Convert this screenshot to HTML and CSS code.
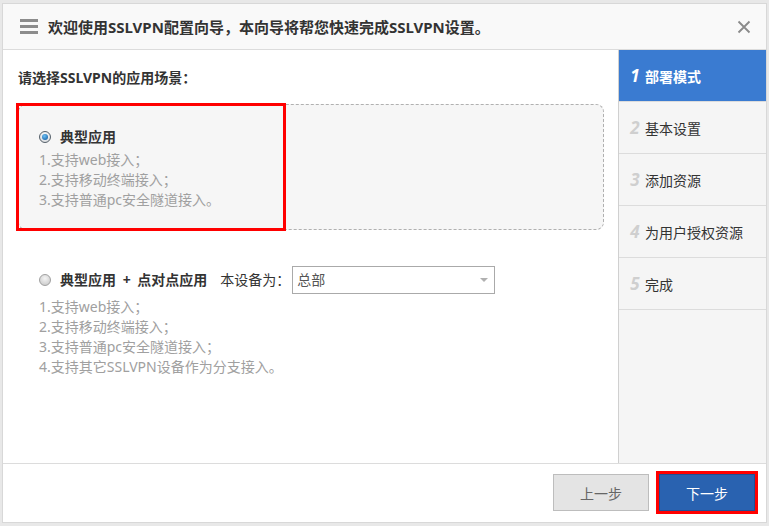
FILE: index.html
```html
<!DOCTYPE html>
<html lang="zh-CN">
<head>
    <meta charset="UTF-8">
    <title>SSLVPN配置向导</title>
    <link rel="stylesheet" href="styles.css">
</head>
<body>
    <div class="wizard">
        <div class="wizard-header">
            <span class="menu-icon"><i></i><i></i><i></i></span>
            <span class="wizard-title">欢迎使用SSLVPN配置向导，本向导将帮您快速完成SSLVPN设置。</span>
            <svg class="close-icon" width="14" height="14" viewBox="0 0 14 14">
                <path d="M1.5 1.5 L12.5 12.5 M12.5 1.5 L1.5 12.5" stroke="#8a8a8a" stroke-width="1.8" fill="none"/>
            </svg>
        </div>

        <div class="wizard-body">
            <div class="main-panel">
                <div class="question">请选择SSLVPN的应用场景：</div>

                <div class="option-box">
                    <div class="highlight"></div>
                    <div class="option-title">
                        <span class="radio checked"></span>
                        <b>典型应用</b>
                    </div>
                    <div class="option-desc">1.支持web接入；</div>
                    <div class="option-desc">2.支持移动终端接入；</div>
                    <div class="option-desc">3.支持普通pc安全隧道接入。</div>
                </div>

                <div class="option-plain">
                    <div class="option-title">
                        <span class="radio"></span>
                        <b>典型应用 <span class="plus">+</span> 点对点应用</b>
                        <span class="device-label">本设备为：</span>
                        <div class="select-box">
                            <span>总部</span>
                            <span class="select-arrow"></span>
                        </div>
                    </div>
                    <div class="option-desc">1.支持web接入；</div>
                    <div class="option-desc">2.支持移动终端接入；</div>
                    <div class="option-desc">3.支持普通pc安全隧道接入；</div>
                    <div class="option-desc">4.支持其它SSLVPN设备作为分支接入。</div>
                </div>
            </div>

            <ul class="steps">
                <li class="step active"><span class="step-num">1</span>部署模式</li>
                <li class="step"><span class="step-num">2</span>基本设置</li>
                <li class="step"><span class="step-num">3</span>添加资源</li>
                <li class="step"><span class="step-num">4</span>为用户授权资源</li>
                <li class="step"><span class="step-num">5</span>完成</li>
            </ul>
        </div>

        <div class="wizard-footer">
            <button class="btn btn-prev">上一步</button>
            <button class="btn btn-next">下一步</button>
        </div>
    </div>
</body>
</html>
```

FILE: styles.css
```css
* {
    box-sizing: border-box;
}

body {
    margin: 0;
    padding: 3px 2px;
    background-color: #e8e8e8;
    font-family: "Noto Sans", "Noto Sans CJK SC", sans-serif;
    font-size: 14px;
    color: #333;
}

.wizard {
    height: 520px;
    display: flex;
    flex-direction: column;
    background-color: #fff;
    border: 1px solid #d8d8d8;
}

.wizard-header {
    height: 46px;
    flex-shrink: 0;
    display: flex;
    align-items: center;
    padding: 0 15px 0 17px;
    background-color: #f9f9f9;
    border-bottom: 1px solid #dcdcdc;
}

.menu-icon {
    display: flex;
    flex-direction: column;
    gap: 3px;
    width: 18px;
    margin-right: 10px;
}

.menu-icon i {
    display: block;
    height: 3px;
    background-color: #8c8c8c;
}

.wizard-title {
    flex: 1;
    font-size: 15px;
    font-weight: bold;
    line-height: 20px;
}

.close-icon {
    display: block;
}

.wizard-body {
    flex: 1;
    display: flex;
    min-height: 0;
}

.main-panel {
    flex: 1;
    padding: 18px 14px 0 15px;
}

.question {
    font-weight: bold;
    line-height: 20px;
    margin-bottom: 16px;
}

.option-box {
    position: relative;
    height: 126px;
    padding: 19px 0 0 20px;
    background-color: #f6f6f6;
    border: 1px dashed #b0b0b0;
    border-radius: 8px;
}

.highlight {
    position: absolute;
    top: -2px;
    left: -3px;
    width: 270px;
    height: 128px;
    border: 3px solid #f00;
}

.option-title {
    display: flex;
    align-items: center;
    height: 26px;
    line-height: 20px;
}

.option-title b {
    margin-left: 9px;
}

.plus {
    margin: 0 3px;
}

.option-desc {
    line-height: 20px;
    color: #a0a0a0;
}

.option-plain {
    padding: 36px 0 0 21px;
}

.option-plain .option-title {
    height: 28px;
    margin-bottom: 3px;
}

.radio {
    width: 12px;
    height: 12px;
    border-radius: 50%;
    border: 1px solid #a0a0a0;
    background: radial-gradient(circle at 50% 35%, #f4f4f4, #c4c4c4);
    position: relative;
    flex-shrink: 0;
}

.radio.checked {
    border-color: #55606a;
    background: radial-gradient(circle at 50% 35%, #ffffff, #d0d4d8);
}

.radio.checked::after {
    content: "";
    position: absolute;
    top: 2px;
    left: 2px;
    width: 6px;
    height: 6px;
    border-radius: 50%;
    background: radial-gradient(circle at 40% 35%, #6cc0f5, #0a5299);
}

.device-label {
    margin-left: 13px;
}

.select-box {
    width: 203px;
    height: 28px;
    margin-left: 2px;
    display: flex;
    align-items: center;
    justify-content: space-between;
    padding: 0 6px 0 4px;
    border: 1px solid #aaa;
    color: #555;
    background-color: #fff;
}

.select-arrow {
    width: 0;
    height: 0;
    border-left: 4px solid transparent;
    border-right: 4px solid transparent;
    border-top: 4px solid #b0b0b0;
}

.steps {
    list-style: none;
    margin: 0;
    padding: 0;
    width: 148px;
    flex-shrink: 0;
    background-color: #f5f5f5;
    border-left: 1px solid #d0d0d0;
}

.step {
    height: 52px;
    display: flex;
    align-items: center;
    padding-left: 6px;
    border-bottom: 1px solid #dcdcdc;
}

.step-num {
    width: 20px;
    font-size: 17px;
    font-weight: bold;
    font-style: italic;
    color: #cfcfcf;
    text-align: center;
}

.step.active {
    background-color: #3a7bd1;
    color: #fff;
    font-weight: bold;
}

.step.active .step-num {
    color: #fff;
}

.wizard-footer {
    height: 59px;
    flex-shrink: 0;
    display: flex;
    justify-content: flex-end;
    align-items: flex-start;
    gap: 10px;
    padding: 10px 11px 0 0;
    border-top: 1px solid #dcdcdc;
}

.btn {
    width: 96px;
    height: 37px;
    font-family: inherit;
    font-size: 14px;
    cursor: pointer;
}

.btn-prev {
    background-color: #e4e4e4;
    border: 1px solid #bdbdbd;
    color: #666;
}

.btn-next {
    background-color: #2962b0;
    border: 1px solid #1f4f95;
    color: #fff;
    outline: 3px solid #f00;
}
```
